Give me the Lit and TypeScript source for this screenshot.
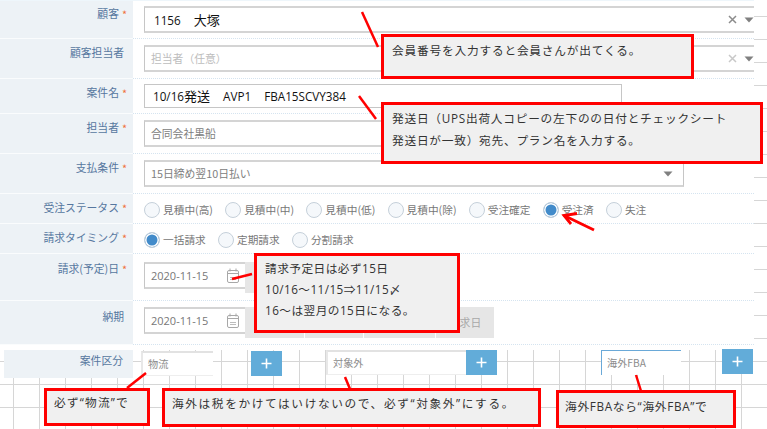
import { LitElement, html, css, svg } from "lit";
import { customElement } from "lit/decorators.js";

const caret = html`<svg class="caret" width="10" height="6" viewBox="0 0 10 6"><path d="M0.5 0.5h9L5 5.5z" fill="#808080"/></svg>`;
const cross = (light: boolean) => html`<svg class="cross" width="9" height="9" viewBox="0 0 9 9"><path d="M1 1l7 7M8 1l-7 7" stroke=${light ? "#c8c8c8" : "#8c8c8c"} stroke-width="1.5" fill="none"/></svg>`;
const calendar = html`<svg class="cal" width="12" height="15" viewBox="0 0 12 15" fill="none" stroke="#a8a8a8"><rect x="0.5" y="2.5" width="11" height="12" rx="1.5"/><path d="M3 0.5v3M9 0.5v3M0.5 5.5h11"/><path d="M3 9.5h6M3 11.5h6" stroke="#bdbdbd"/></svg>`;

const radios = (items: string[], checked: string) => html`<div class="radios">
  ${items.map((t) => html`<span class="radio-item"><span class="radio ${t === checked ? "on" : ""}"></span><span>${t}</span></span>`)}
</div>`;

const label = (t: string, req = true) => html`<div class="label">${t}${req ? html`<i>*</i>` : ""}</div>`;

@customElement("app-root")
export class AppRoot extends LitElement {
  static styles = css`
    :host {
      display: block;
      position: relative;
      width: 767px;
      height: 429px;
      overflow: hidden;
      font-family: "Open Sans", "Noto Sans CJK JP", sans-serif;
      background-color: #fff;
      background-image: linear-gradient(#d6d6d6 1px, transparent 1px), linear-gradient(90deg, #d6d6d6 1px, transparent 1px);
      background-size: 26px 23px;
      background-position: 13px 16px;
    }
    * { box-sizing: border-box; }
    .form { width: 754px; background: #fff; padding-bottom: 5px; border-top: 1px solid #eef6fb; }
    .row { display: grid; grid-template-columns: 133px 1fr; }
    .h38 { height: 38px; } .h40 { height: 40px; } .h35 { height: 35px; } .h30 { height: 30px; } .h47 { height: 47px; } .h44 { height: 44px; }
    .label {
      background: #edf2f6;
      border-bottom: 1px solid #fafcfd;
      text-align: right;
      padding: 6px 9px 0 0;
      font: 10.8px/15px "Noto Sans CJK JP", sans-serif;
      color: #56779f;
    }
    .h38 .label { padding-top: 5px; }
    .h47 .label { padding-top: 7px; }
    .h44 .label { padding-top: 8px; }
    .label i { font-style: normal; color: #f0703c; margin-left: 3px; margin-right: -3px; position: relative; top: 1px; }
    .value {
      display: flex;
      align-items: center;
      padding-left: 11px;
      border-bottom: 1px dotted #d5e4f0;
      min-width: 0;
    }
    .field {
      display: flex;
      align-items: center;
      background: #fff;
      border: 1px solid #c6c6c6;
      border-top: 2px solid #d4d4d4;
      border-bottom: 2px solid #d4d4d4;
      font: 10.8px/15px "Noto Sans CJK JP", sans-serif;
      color: #808080;
      padding-left: 6px;
      height: 27px;
    }
    .full { width: 100%; border-right: none; }
    .w477 { width: 478px; height: 24px; border-width: 1px; border-color: #c6c6c6; }
    .w540 { width: 540px; }
    .typed { padding-left: 9px; color: #111; font: 11.7px/15px "Open Sans", sans-serif; }
    .typed b { font: 400 13px/15px "Noto Sans CJK JP", sans-serif; }
    .ph { color: #bdbdbd; }
    .spacer { flex: 1; }
    .cross { margin-right: 7px; }
    .w540 .caret { margin-right: 10px; }
    .radios { display: flex; gap: 12.2px; padding-top: 2px; font: 10.7px/15px "Noto Sans CJK JP", sans-serif; color: #777; }
    .radio-item { display: flex; align-items: center; gap: 3px; }
    .radio {
      width: 16px; height: 16px; border-radius: 50%;
      border: 1.5px solid #c5d0da; background: #f5f8fb; flex: none;
    }
    .radio.on { background: #428bca; box-shadow: inset 0 0 0 1.5px #fff; }
    .date { display: flex; height: 31px; }
    .date .field { width: 101px; padding-right: 6px; font: 11px/15px "Open Sans", sans-serif; color: #777; justify-content: space-between; border-right: none; }
    .date .btn {
      background: #e6e6e6; color: #a8a8a8; height: 31px;
      font: 10.8px/31px "Noto Sans CJK JP", sans-serif; text-align: center; margin-right: 1px;
    }
    .b59 { width: 59px; } .b58 { width: 58px; } .b71 { width: 71px; }
    .kubun {
      display: grid;
      grid-template-columns: 4px 129px 8px 72px 38px 31px 44px 140px 31px 104px 80px 41px 31px;
      height: 28px;
    }
    .kubun .label { grid-column: 2; padding: 3px 10px 0 0; border: none; height: 28px; }
    .kin {
      height: 25px; background: #fff;
      border-top: 2px solid #e2e2e2; border-left: 2px solid #e8e8e8; border-bottom: 1px solid #eee;
      font: 10.2px/21px "Noto Sans CJK JP", sans-serif; color: #8c8c8c; padding-left: 5px;
    }
    .k1 { grid-column: 4; margin-top: 1px; }
    .k2 { grid-column: 8; }
    .k3 { grid-column: 11; border-top: 1px solid #6aa9d8; border-left: 1px solid #6aa9d8; border-bottom: none; line-height: 23px; }
    .plus {
      height: 25px; background: #62acd9; color: #fff; display: flex; align-items: center; justify-content: center;
    }
    .p1 { grid-column: 6; margin-top: 1px; }
    .p2 { grid-column: 9; }
    .p3 { grid-column: 13; margin-top: -1px; }
    .note {
      position: absolute;
      background: #f0f0f0;
      border: 3px solid #f00;
      color: #333;
      font: 11.7px/21px "Open Sans", "Noto Sans CJK JP", sans-serif;
      letter-spacing: 0.3px;
      white-space: pre;
    }
    .n1 { left: 381px; top: 34px; width: 313px; height: 45px; padding: 3px 0 0 8px; letter-spacing: 0.8px; }
    .n2 { left: 381px; top: 102px; width: 382px; height: 62px; padding: 2px 0 0 8px; line-height: 22px; letter-spacing: 0.75px; }
    .n3 { left: 254px; top: 253px; width: 206px; height: 80px; padding: 2px 0 0 8px; letter-spacing: 0.45px; }
    .n4 { left: 44px; top: 388px; width: 106px; height: 38px; padding: 1px 0 0 7px; letter-spacing: 1.2px; }
    .n5 { left: 162px; top: 388px; width: 379px; height: 39px; padding: 2px 0 0 7px; letter-spacing: 1.6px; }
    .n6 { left: 556px; top: 390px; width: 180px; height: 38px; padding: 3px 0 0 6px; letter-spacing: 0.7px; }
    .marks { position: absolute; inset: 0; pointer-events: none; }
  `;

  render() {
    const plus = html`<svg width="11" height="11" viewBox="0 0 11 11"><path d="M5.5 0.5v10M0.5 5.5h10" stroke="#fff" stroke-width="1.6" fill="none"/></svg>`;
    return html`
      <div class="form">
        <div class="row h38">${label("顧客")}<div class="value">
          <div class="field full typed"><span>1156<b>　大塚</b></span><span class="spacer"></span>${cross(false)}${caret}</div>
        </div></div>
        <div class="row h40">${label("顧客担当者", false)}<div class="value">
          <div class="field full ph"><span>担当者（任意）</span><span class="spacer"></span>${cross(true)}${caret}</div>
        </div></div>
        <div class="row h35">${label("案件名")}<div class="value">
          <div class="field w477 typed" style="padding-left:8px"><span>10/16<b>発送</b><b>　</b>AVP1<b>　</b>FBA15SCVY384</span></div>
        </div></div>
        <div class="row h40">${label("担当者")}<div class="value">
          <div class="field w540"><span>合同会社黒船</span></div>
        </div></div>
        <div class="row h40">${label("支払条件")}<div class="value">
          <div class="field w540"><span>15日締め翌10日払い</span><span class="spacer"></span>${caret}</div>
        </div></div>
        <div class="row h30">${label("受注ステータス")}<div class="value">
          ${radios(["見積中(高)", "見積中(中)", "見積中(低)", "見積中(除)", "受注確定", "受注済", "失注"], "受注済")}
        </div></div>
        <div class="row h30">${label("請求タイミング")}<div class="value">
          ${radios(["一括請求", "定期請求", "分割請求"], "一括請求")}
        </div></div>
        <div class="row h47">${label("請求(予定)日")}<div class="value">
          <div class="date"><div class="field"><span>2020-11-15</span>${calendar}</div><div class="btn b59"></div></div>
        </div></div>
        <div class="row h44">${label("納期", false)}<div class="value">
          <div class="date"><div class="field"><span>2020-11-15</span>${calendar}</div>
            <div class="btn b59"></div><div class="btn b58"></div><div class="btn b71"></div><div class="btn b58">請求日</div></div>
        </div></div>
      </div>
      <div class="kubun">
        ${label("案件区分", false)}
        <div class="kin k1">物流</div><div class="plus p1">${plus}</div>
        <div class="kin k2">対象外</div><div class="plus p2">${plus}</div>
        <div class="kin k3">海外FBA</div><div class="plus p3">${plus}</div>
      </div>

      <svg class="marks" width="767" height="429" viewBox="0 0 767 429" fill="none" stroke="#f00" stroke-width="2.5">
        ${svg`
          <path d="M362 12L378 47"/>
          <path d="M359 96L376 119"/>
          <path d="M232 279L252 274"/>
          <path d="M594 230L564 215.5" stroke-width="2.8"/>
          <path d="M577 213.5L564 215.5L571 224" stroke-width="2.8"/>
          <path d="M146 373L127 388"/>
          <path d="M345 377L350 389"/>
          <path d="M636 375L641 391"/>
        `}
      </svg>
      <div class="note n1">会員番号を入力すると会員さんが出てくる。</div>
      <div class="note n2">発送日（UPS出荷人コピーの左下のの日付とチェックシート
発送日が一致）宛先、プラン名を入力する。</div>
      <div class="note n3">請求予定日は必ず15日
10/16〜11/15⇒11/15〆
16〜は翌月の15日になる。</div>
      <div class="note n4">必ず“物流”で</div>
      <div class="note n5">海外は税をかけてはいけないので、必ず“対象外”にする。</div>
      <div class="note n6">海外FBAなら“海外FBA”で</div>
    `;
  }
}
